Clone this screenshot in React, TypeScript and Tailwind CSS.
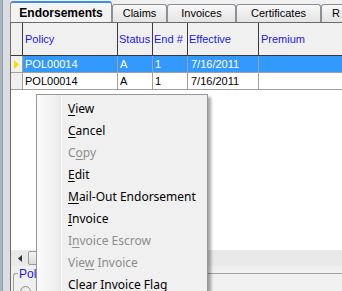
import type { ReactNode } from "react";

const MENU_ITEMS: { label: ReactNode; disabled?: boolean }[] = [
  { label: <><u>V</u>iew</> },
  { label: <><u>C</u>ancel</> },
  { label: <>C<u>o</u>py</>, disabled: true },
  { label: <><u>E</u>dit</> },
  { label: <><u>M</u>ail-Out Endorsement</> },
  { label: <><u>I</u>nvoice</> },
  { label: <>I<u>n</u>voice Escrow</>, disabled: true },
  { label: <>Vie<u>w</u> Invoice</>, disabled: true },
  { label: <>C<u>l</u>ear Invoice Flag</> },
];

const ROWS = [
  { policy: "POL00014", status: "A", end: "1", effective: "7/16/2011", premium: "" },
  { policy: "POL00014", status: "A", end: "1", effective: "7/16/2011", premium: "" },
];

function Tab({ label, width }: { label: string; width: string }) {
  return (
    <div
      className={`flex h-[18px] ${width} shrink-0 items-center justify-center rounded-t-[3px] border border-b-0 border-[#8d9096] bg-gradient-to-b from-[#f7f7f7] to-[#e4e4e4] text-[11px] text-black`}
    >
      {label}
    </div>
  );
}

function ContextMenu() {
  return (
    <div className="absolute left-[36px] top-[94px] flex h-[210px] w-[172px] border border-[#979797] bg-[#f0f0f0] shadow-[3px_3px_3px_rgba(0,0,0,0.35)]">
      {/* icon gutter */}
      <div className="flex w-[25px] shrink-0 border-l border-[#fafafa]">
        <div className="flex-1 bg-gradient-to-r from-[#fbfbfb] to-[#ebebeb]" />
        <div className="w-px bg-[#e2e3e3]" />
        <div className="w-px bg-white" />
      </div>
      <ul className="flex flex-col pt-[3px] pl-[6px] font-['Noto_Sans',sans-serif] text-[12px]">
        {MENU_ITEMS.map((item, i) => (
          <li
            key={i}
            className={`flex h-[22px] items-center ${item.disabled ? "text-[#8d8d8d]" : "text-black"}`}
          >
            <span className="[&_u]:underline-offset-2">{item.label}</span>
          </li>
        ))}
      </ul>
    </div>
  );
}

export default function App() {
  return (
    <div className="relative flex h-[291px] w-[342px] overflow-hidden bg-[#f0f0f0] font-['Liberation_Sans',Arial,sans-serif]">
      {/* window frame */}
      <div className="flex h-full w-[10px] shrink-0">
        <div className="w-[2px] bg-[#aeb2b8]" />
        <div className="w-px bg-[#7c9ec8]" />
        <div className="flex-1 bg-[#dddddd]" />
      </div>

      <div className="flex min-w-0 flex-1 flex-col">
        {/* tabs */}
        <div className="flex h-[22px] items-end">
          <div className="flex h-[21px] w-[102px] shrink-0 items-center justify-center rounded-t-[3px] border-x border-t-2 border-x-[#8d9096] border-t-[#3b8de0] bg-[#f3f3f3] text-[12px] font-bold text-black">
            Endorsements
          </div>
          <Tab label="Claims" width="w-[55px]" />
          <Tab label="Invoices" width="w-[69px]" />
          <Tab label="Certificates" width="w-[85px]" />
          <div className="flex h-[18px] w-[30px] shrink-0 items-center rounded-tl-[3px] border border-b-0 border-[#8d9096] bg-gradient-to-b from-[#f7f7f7] to-[#e4e4e4] pl-[10px] text-[11px]">
            R
          </div>
        </div>

        {/* grid */}
        <div className="flex flex-1 flex-col border-l border-t border-[#6b6b6b] bg-white text-[11px]">
          <div className="flex h-[33px] border-b border-[#3a3a3a] bg-[#f0f0f0] text-[#1a1aee]">
            <div className="w-[12px] shrink-0 border-r border-[#3a3a3a]" />
            <div className="flex w-[95px] shrink-0 items-center border-r border-[#3a3a3a] pl-[2px]">Policy</div>
            <div className="flex w-[35px] shrink-0 items-center border-r border-[#3a3a3a] pl-[1px]">Status</div>
            <div className="flex w-[35px] shrink-0 items-center overflow-hidden whitespace-nowrap border-r border-[#3a3a3a] pl-[1px]">End #</div>
            <div className="flex w-[71px] shrink-0 items-center border-r border-[#3a3a3a] pl-[1px]">Effective</div>
            <div className="flex flex-1 items-center pl-[2px]">Premium</div>
          </div>

          {ROWS.map((row, i) => {
            const selected = i === 0;
            const cell = `flex shrink-0 items-center border-r border-[#a0a0a0] ${selected ? "bg-[#3399ff] text-white" : "text-black"}`;
            return (
              <div key={i} className="flex h-[17px] border-b border-[#a0a0a0]">
                <div className="flex w-[12px] shrink-0 items-center justify-center border-r border-[#a0a0a0] bg-[#f0f0f0]">
                  {selected && (
                    <svg width="5" height="9" viewBox="0 0 5 9">
                      <path d="M0 0 L5 4.5 L0 9 Z" fill="#f5e000" />
                    </svg>
                  )}
                </div>
                <div className={`${cell} w-[95px] pl-[2px]`}>{row.policy}</div>
                <div className={`${cell} w-[35px] pl-[2px]`}>{row.status}</div>
                <div className={`${cell} w-[35px] pl-[2px]`}>{row.end}</div>
                <div className={`${cell} w-[71px] pl-[3px]`}>{row.effective}</div>
                <div className={`${cell} flex-1 border-r-0`}>{row.premium}</div>
              </div>
            );
          })}
          <div className="flex-1" />

          {/* horizontal scrollbar */}
          <div className="flex h-[16px] shrink-0 bg-[#e9e9e9]">
            <div className="flex w-[17px] items-center justify-center">
              <svg width="4" height="7" viewBox="0 0 4 7">
                <path d="M4 0 L0 3.5 L4 7 Z" fill="#333" />
              </svg>
            </div>
            <div className="my-[1px] w-[130px] rounded-[2px] border border-[#9a9a9a] bg-gradient-to-b from-[#f4f4f4] to-[#dcdcdc]" />
          </div>

          {/* group box */}
          <div className="h-[25px] shrink-0 bg-[#f0f0f0] pt-[3px]">
            <div className="relative ml-[2px] mt-[4px] h-[30px] rounded-tl-[3px] border-l border-t border-[#a0a0a0]">
              <span className="absolute -top-[7px] left-[4px] bg-[#f0f0f0] px-[1px] text-[12px] leading-[14px] text-[#1a1aee]">
                Policy
              </span>
              <div className="absolute left-[6px] top-[12px] h-[11px] w-[11px] rounded-full border border-[#8e8f8f] bg-gradient-to-br from-[#e0e0e0] to-white" />
            </div>
          </div>
        </div>
      </div>

      <ContextMenu />
    </div>
  );
}
